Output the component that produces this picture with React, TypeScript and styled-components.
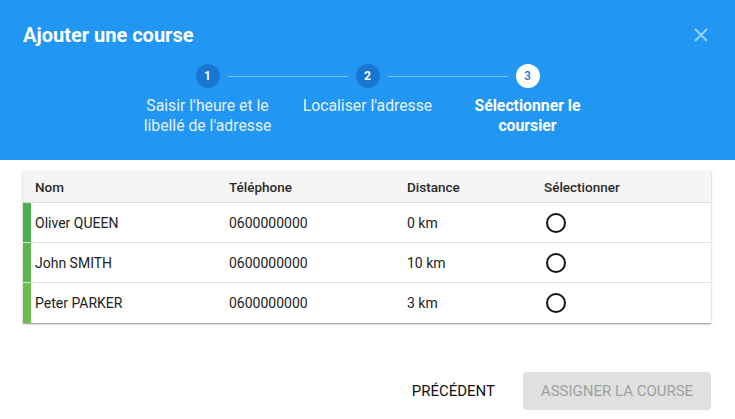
import React from 'react';
import styled, { createGlobalStyle } from 'styled-components';

type Courier = {
  name: string,
  phone: string,
  distance: string,
  color: string,
}

const couriers: Courier[] = [
  { name: 'Oliver QUEEN', phone: '0600000000', distance: '0 km', color: '#4caf50' },
  { name: 'John SMITH', phone: '0600000000', distance: '10 km', color: '#5bb64f' },
  { name: 'Peter PARKER', phone: '0600000000', distance: '3 km', color: '#6abd4b' },
];

const steps = [
  "Saisir l'heure et le libellé de l'adresse",
  "Localiser l'adresse",
  'Sélectionner le coursier',
];

const GlobalStyle = createGlobalStyle`
  body {
    margin: 0;
    background: #fff;
    font-family: Roboto, "Liberation Sans", sans-serif;
  }
  * {
    box-sizing: border-box;
  }
`

const App: React.FC = () => {
  const active = 2;
  return (
    <>
      <GlobalStyle />
      <Dialog>
        <Header>
          <TitleRow>
            <Title>Ajouter une course</Title>
            <Close aria-label="Fermer">
              <svg width="14" height="14" viewBox="0 0 14 14">
                <path d="M1 1L13 13M13 1L1 13" stroke="currentColor" strokeWidth="2" />
              </svg>
            </Close>
          </TitleRow>
          <Stepper>
            {steps.map((label, i) => (
              <Step key={label}>
                <Track>
                  <Line visible={i > 0} side="left" />
                  <Circle current={i === active}>{i + 1}</Circle>
                  <Line visible={i < steps.length - 1} side="right" />
                </Track>
                <StepLabel current={i === active}>{label}</StepLabel>
              </Step>
            ))}
          </Stepper>
        </Header>

        <Card>
          <HeadRow>
            <span />
            <HeadCell>Nom</HeadCell>
            <HeadCell>Téléphone</HeadCell>
            <HeadCell>Distance</HeadCell>
            <HeadCell>Sélectionner</HeadCell>
          </HeadRow>
          {couriers.map((c) => (
            <Row key={c.name}>
              <Bar color={c.color} />
              <Cell>{c.name}</Cell>
              <Cell>{c.phone}</Cell>
              <Cell>{c.distance}</Cell>
              <Cell><Radio type="button" aria-label={`Sélectionner ${c.name}`} /></Cell>
            </Row>
          ))}
        </Card>

        <Footer>
          <TextButton>Précédent</TextButton>
          <FilledButton disabled>Assigner la course</FilledButton>
        </Footer>
      </Dialog>
    </>
  )
}

const Dialog = styled.div`
  width: 735px;
  height: 419px;
  background: #fff;
  display: flex;
  flex-direction: column;
  overflow: hidden;
`

const Header = styled.header`
  background: #2196f3;
  height: 160px;
  flex-shrink: 0;
  padding: 20px 23px 0 23px;
  color: #fff;
`

const TitleRow = styled.div`
  display: flex;
  align-items: center;
  justify-content: space-between;
  height: 30px;
`

const Title = styled.h2`
  margin: 0;
  font-size: 20px;
  font-weight: 700;
  line-height: 30px;
`

const Close = styled.button`
  background: none;
  border: none;
  padding: 0;
  margin-right: 4px;
  width: 14px;
  height: 14px;
  display: flex;
  color: rgba(255, 255, 255, 0.55);
  cursor: pointer;
`

const Stepper = styled.div`
  display: flex;
  justify-content: center;
  margin-top: 14px;
  margin-left: -23px;
  margin-right: -23px;
`

const Step = styled.div`
  width: 160px;
  display: flex;
  flex-direction: column;
  align-items: center;
`

const Track = styled.div`
  width: 100%;
  display: flex;
  align-items: center;
  height: 24px;
`

const Line = styled.span<{ visible: boolean, side: 'left' | 'right' }>`
  flex: 1;
  height: 1px;
  background: ${(p) => p.visible ? 'rgba(255, 255, 255, 0.4)' : 'transparent'};
  ${(p) => p.side === 'left' ? 'margin-right: 8px;' : 'margin-left: 8px;'}
`

const Circle = styled.span<{ current: boolean }>`
  width: 24px;
  height: 24px;
  border-radius: 50%;
  display: flex;
  align-items: center;
  justify-content: center;
  font-size: 12px;
  font-weight: ${(p) => p.current ? 500 : 700};
  background: ${(p) => p.current ? '#fff' : '#1976d2'};
  color: ${(p) => p.current ? '#1976d2' : '#fff'};
`

const StepLabel = styled.div<{ current: boolean }>`
  width: 144px;
  margin-top: 8px;
  text-align: center;
  font-size: 15.75px;
  line-height: 20px;
  font-weight: ${(p) => p.current ? 700 : 400};
  color: ${(p) => p.current ? '#fff' : 'rgba(255, 255, 255, 0.9)'};
`

const Card = styled.div`
  margin: 11px 24px 0 23px;
  background: #fff;
  box-shadow: 0 1px 3px rgba(0, 0, 0, 0.2), 0 1px 1px rgba(0, 0, 0, 0.14), 0 2px 1px -1px rgba(0, 0, 0, 0.12);
`

const columns = '8px 194px 178px 137px 1fr';

const HeadRow = styled.div`
  display: grid;
  grid-template-columns: ${columns};
  height: 32px;
  align-items: center;
  background: #f5f5f5;
  border-bottom: 1px solid #dcdcdc;
`

const HeadCell = styled.div`
  padding-left: 4px;
  font-size: 13.5px;
  font-weight: 500;
  color: #2a2a2a;
`

const Row = styled.div`
  display: grid;
  grid-template-columns: ${columns};
  height: 40px;
  align-items: center;
  border-bottom: 1px solid #e0e0e0;
  &:last-child {
    border-bottom: none;
  }
`

const Bar = styled.span<{ color: string }>`
  align-self: stretch;
  background: ${(p) => p.color};
`

const Cell = styled.div`
  padding-left: 4px;
  font-size: 14px;
  color: #222;
  display: flex;
  align-items: center;
`

const Radio = styled.button`
  width: 20px;
  height: 20px;
  margin-left: 2px;
  padding: 0;
  border-radius: 50%;
  border: 2px solid #111;
  background: #fff;
  cursor: pointer;
`

const Footer = styled.div`
  display: flex;
  justify-content: flex-end;
  align-items: center;
  gap: 12px;
  margin-top: 49px;
  padding-right: 24px;
`

const TextButton = styled.button`
  height: 38px;
  padding: 0 16px;
  background: none;
  border: none;
  border-radius: 4px;
  font-family: Roboto, sans-serif;
  font-size: 15px;
  font-weight: 400;
  text-transform: uppercase;
  color: #111;
  cursor: pointer;
`

const FilledButton = styled.button`
  width: 188px;
  height: 38px;
  background: #e0e0e0;
  border: none;
  border-radius: 4px;
  font-family: Roboto, sans-serif;
  font-size: 15px;
  font-weight: 400;
  text-transform: uppercase;
  color: #a0a0a0;
`

export default App;
